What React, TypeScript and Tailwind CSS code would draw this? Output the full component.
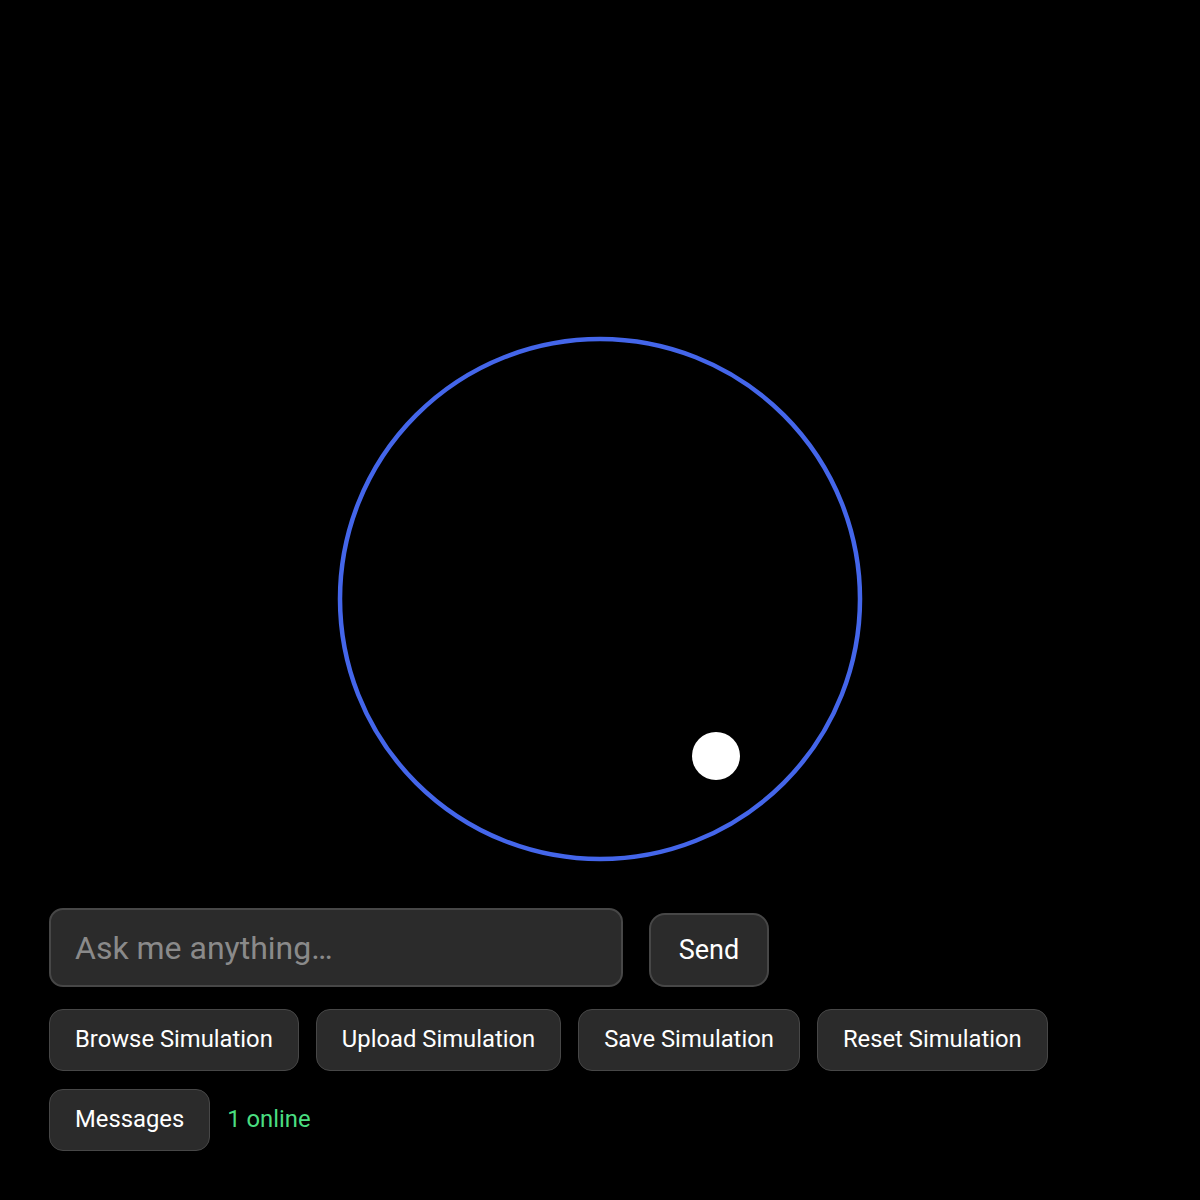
import React, { useState } from 'react';

const buttonClass =
  'h-[62px] px-[25px] rounded-[14px] border border-[#474747] bg-[#2b2b2b] text-white text-[23.8px] leading-none';

export default function App() {
  const [prompt, setPrompt] = useState('');

  return (
    <div className="relative w-full h-[1200px] bg-black overflow-hidden" style={{ fontFamily: 'Roboto, "Noto Sans", sans-serif' }}>
      {/* simulation canvas: boundary ring and the ball */}
      <svg className="absolute inset-0" width="1200" height="1200" viewBox="0 0 1200 1200">
        <circle cx="600" cy="599" r="260" fill="none" stroke="#4466ea" strokeWidth="4.5" />
        <circle cx="716" cy="756" r="24" fill="#ffffff" />
      </svg>

      {/* controls overlay */}
      <div className="absolute left-[49px] bottom-[49px] flex flex-col">
        <div className="flex items-end gap-[26px]">
          <input
            value={prompt}
            onChange={(e) => setPrompt(e.target.value)}
            placeholder="Ask me anything…"
            className="w-[574px] h-[79px] px-[24px] rounded-[14px] border-2 border-[#474747] bg-[#2b2b2b] text-white text-[32px] placeholder:text-[#8a8a8a] outline-none"
          />
          <button className="w-[120px] h-[74px] rounded-[16px] border-2 border-[#474747] bg-[#2b2b2b] text-white text-[27px] leading-none">
            Send
          </button>
        </div>
        <div className="flex gap-[17px] mt-[22px]">
          <button className={buttonClass}>Browse Simulation</button>
          <button className={buttonClass}>Upload Simulation</button>
          <button className={buttonClass}>Save Simulation</button>
          <button className={buttonClass}>Reset Simulation</button>
        </div>
        <div className="flex items-center gap-[17px] mt-[18px]">
          <button className={buttonClass}>Messages</button>
          <span className="text-[23.8px] text-[#4ade80]">1 online</span>
        </div>
      </div>
    </div>
  );
}
